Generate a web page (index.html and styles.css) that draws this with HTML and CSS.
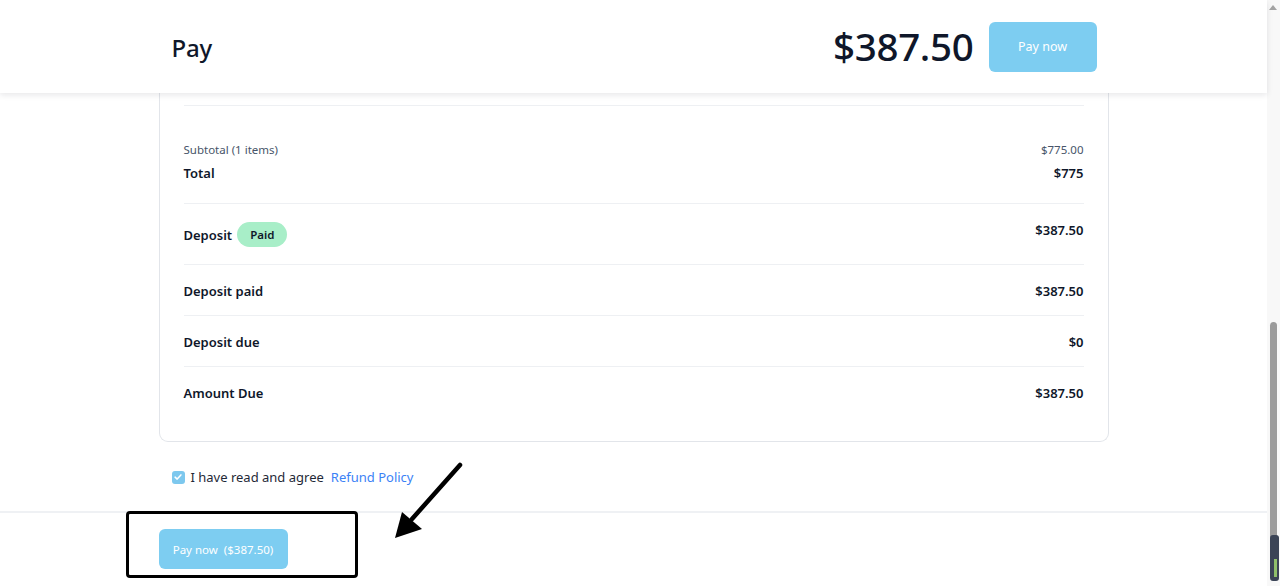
FILE: index.html
```html
<!DOCTYPE html>
<html lang="en">
<head>
<meta charset="utf-8">
<title>Pay</title>
<link rel="stylesheet" href="styles.css">
</head>
<body>
<div class="app">
  <div class="page">
    <header class="topbar">
      <div class="topbar-inner">
        <h1 class="title">Pay</h1>
        <div class="top-right">
          <span class="big-amount">$387.50</span>
          <button class="btn btn-top">Pay now</button>
        </div>
      </div>
    </header>
    <main class="main">
      <div class="container">
        <section class="card">
          <div class="card-top"></div>
          <div class="summary">
            <div class="line sub"><span>Subtotal (1 items)</span><span>$775.00</span></div>
            <div class="line strong"><span>Total</span><span>$775</span></div>
          </div>
          <div class="row deposit">
            <div class="label-wrap"><span class="label">Deposit</span><span class="badge">Paid</span></div>
            <span class="value">$387.50</span>
          </div>
          <div class="row"><span class="label">Deposit paid</span><span class="value">$387.50</span></div>
          <div class="row"><span class="label">Deposit due</span><span class="value">$0</span></div>
          <div class="row last"><span class="label">Amount Due</span><span class="value">$387.50</span></div>
        </section>
        <label class="agree">
          <span class="checkbox"><svg viewBox="0 0 12 12" width="10" height="10"><path d="M2.5 6.2 L5 8.5 L9.5 3.5" fill="none" stroke="#fff" stroke-width="1.8" stroke-linecap="round" stroke-linejoin="round"/></svg></span>
          <span class="agree-text">I have read and agree</span>
          <a class="link" href="#">Refund Policy</a>
        </label>
      </div>
    </main>
    <footer class="footer">
      <div class="footer-inner">
        <button class="btn btn-bottom">Pay now&nbsp;&nbsp;($387.50)</button>
      </div>
    </footer>
  </div>
  <div class="scrollbar">
    <span class="arrow-up"></span>
    <div class="thumb"></div>
    <div class="widget"><span class="widget-bar"></span></div>
  </div>
  <div class="annot-box"></div>
  <svg class="annot-arrow" width="80" height="90" viewBox="0 0 80 90">
    <line x1="70" y1="5" x2="22" y2="59" stroke="#000" stroke-width="4.5" stroke-linecap="round"/>
    <polygon points="5,78 12,52 32,69" fill="#000"/>
  </svg>
</div>
</body>
</html>
```

FILE: styles.css
```css
* { box-sizing: border-box; }
html, body { margin: 0; padding: 0; height: 100%; overflow: hidden; }
body {
  font-family: "Noto Sans", "Open Sans", "Liberation Sans", sans-serif;
  color: #0f172a;
  background: #fff;
}
.app {
  display: flex;
  height: 586px;
  position: relative;
}
.page {
  flex: 1;
  display: flex;
  flex-direction: column;
  min-width: 0;
}
.topbar {
  height: 93px;
  flex: none;
  background: #fff;
  box-shadow: 0 2px 6px rgba(15, 23, 42, 0.10);
  position: relative;
  z-index: 2;
}
.topbar-inner {
  width: 950px;
  margin: 0 auto;
  height: 100%;
  padding: 0 12px 0 13px;
  display: flex;
  align-items: center;
  justify-content: space-between;
}
.title {
  margin: 0;
  font-size: 24px;
  font-weight: 500;
  letter-spacing: -0.2px;
  color: #0f172a;
  padding-top: 2px;
}
.top-right {
  display: flex;
  align-items: center;
  gap: 15px;
}
.big-amount {
  font-size: 38.5px;
  font-weight: 500;
  color: #0f172a;
  letter-spacing: -0.3px;
  line-height: 1;
}
.btn {
  border: none;
  background: #7dcdf1;
  color: #fff;
  font-family: inherit;
  border-radius: 6px;
  cursor: pointer;
}
.btn-top {
  width: 108px;
  height: 50px;
  font-size: 12.5px;
}
.main {
  flex: 1;
  overflow: hidden;
  min-height: 0;
}
.container {
  width: 950px;
  margin: 0 auto;
}
.card {
  border: 1px solid #e2e5ea;
  border-top: none;
  border-radius: 0 0 9px 9px;
  padding: 0 24px 0 24px;
  background: #fff;
}
.card-top {
  height: 13px;
  border-bottom: 1px solid #eef0f3;
}
.summary {
  padding: 35px 0 20px;
  border-bottom: 1px solid #eef0f3;
}
.line {
  display: flex;
  justify-content: space-between;
}
.line.sub {
  font-size: 11.5px;
  line-height: 18px;
  color: #475569;
  margin-bottom: 4px;
}
.line.strong {
  font-size: 13px;
  line-height: 20px;
  font-weight: 600;
}
.row {
  display: flex;
  justify-content: space-between;
  align-items: flex-start;
  padding: 16px 0 14px;
  border-bottom: 1px solid #eef0f3;
  font-size: 13px;
  line-height: 20px;
  font-weight: 600;
}
.row.deposit {
  padding: 16px 0 17px;
}
.row.last {
  border-bottom: none;
  padding-bottom: 38px;
}
.label-wrap {
  display: flex;
  align-items: center;
  gap: 5px;
  height: 25px;
  margin-top: 2px;
}
.badge {
  background: #a8eec8;
  color: #0f172a;
  font-size: 11.5px;
  font-weight: 600;
  height: 25px;
  line-height: 25px;
  padding: 0 13px;
  border-radius: 13px;
}
.value { text-align: right; }
.agree {
  display: flex;
  align-items: center;
  margin: 25px 0 0 13px;
  height: 20px;
  font-size: 13px;
}
.checkbox {
  width: 13px;
  height: 13px;
  border-radius: 3px;
  background: #7dc8ee;
  display: flex;
  align-items: center;
  justify-content: center;
  margin-right: 6px;
}
.agree-text { color: #1f2937; }
.link {
  margin-left: 7px;
  color: #3b82f6;
  text-decoration: none;
}
.footer {
  height: 75px;
  flex: none;
  border-top: 2px solid #eff1f4;
  background: #fff;
}
.footer-inner {
  width: 950px;
  margin: 0 auto;
  padding-top: 16px;
}
.btn-bottom {
  width: 129px;
  height: 40px;
  font-size: 11.5px;
  padding: 0;
}
.scrollbar {
  width: 13px;
  flex: none;
  background: #f8f8f8;
  position: relative;
}
.arrow-up {
  position: absolute;
  top: 5px;
  left: 2px;
  border-left: 4.5px solid transparent;
  border-right: 4.5px solid transparent;
  border-bottom: 5px solid #a3a3a3;
}
.thumb {
  position: absolute;
  left: 3px;
  top: 322px;
  width: 7px;
  height: 256px;
  background: #9b9b9b;
  border-radius: 4px;
}
.widget {
  position: absolute;
  left: 3px;
  bottom: 5px;
  width: 9px;
  height: 46px;
  background: #3b4456;
  border-radius: 3px;
}
.widget-bar {
  position: absolute;
  left: 4px;
  top: 24px;
  width: 3px;
  height: 18px;
  background: #8fbf6a;
}
.annot-box {
  position: absolute;
  left: 126px;
  top: 511px;
  width: 232px;
  height: 67px;
  border: 3px solid #000;
  border-radius: 4px;
  z-index: 5;
}
.annot-arrow {
  position: absolute;
  left: 390px;
  top: 460px;
  z-index: 5;
}
```
